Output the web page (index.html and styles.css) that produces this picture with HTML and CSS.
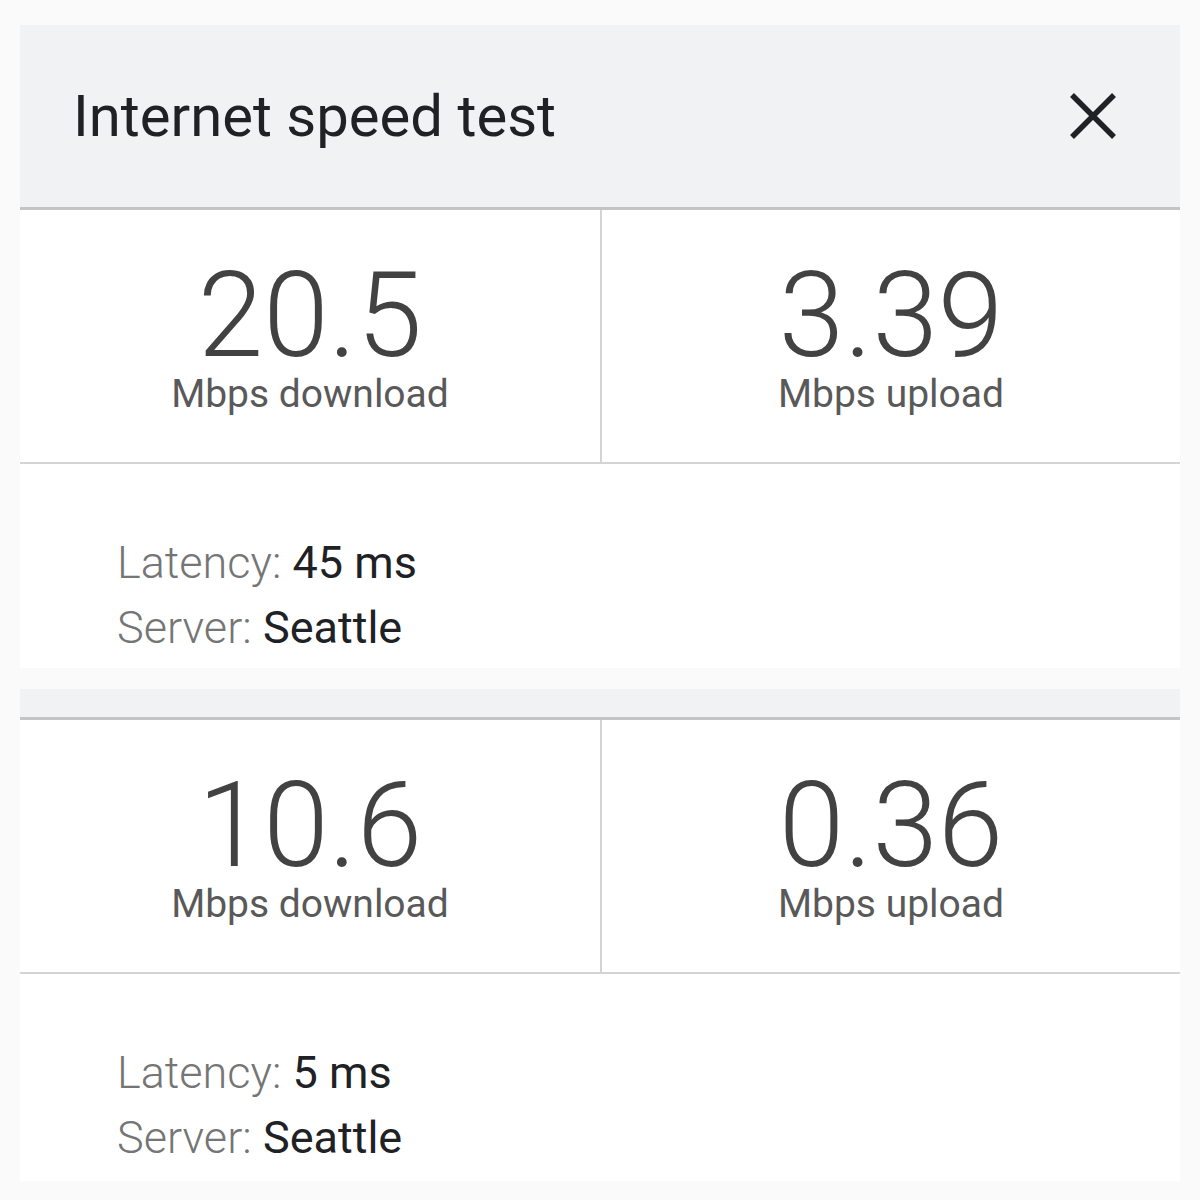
FILE: index.html
```html
<!DOCTYPE html>
<html lang="en">
<head>
<meta charset="UTF-8">
<meta name="viewport" content="width=device-width, initial-scale=1.0">
<title>Internet speed test</title>
<link rel="stylesheet" href="styles.css">
</head>
<body>
  <div class="card">
    <div class="header">
      <h2 class="title">Internet speed test</h2>
      <button class="close" aria-label="Close">
        <svg width="48" height="48" viewBox="0 0 48 48">
          <path d="M3 3L45 45M45 3L3 45" stroke="#202124" stroke-width="5.5" fill="none"/>
        </svg>
      </button>
    </div>
    <div class="stats">
      <div class="stat">
        <div class="value">20.5</div>
        <div class="unit">Mbps download</div>
      </div>
      <div class="stat">
        <div class="value">3.39</div>
        <div class="unit">Mbps upload</div>
      </div>
    </div>
    <div class="info">
      <div class="row"><span class="key">Latency:</span> 45 ms</div>
      <div class="row"><span class="key">Server:</span> Seattle</div>
    </div>
  </div>

  <div class="card">
    <div class="header compact"></div>
    <div class="stats">
      <div class="stat">
        <div class="value">10.6</div>
        <div class="unit">Mbps download</div>
      </div>
      <div class="stat">
        <div class="value">0.36</div>
        <div class="unit">Mbps upload</div>
      </div>
    </div>
    <div class="info tall">
      <div class="row"><span class="key">Latency:</span> 5 ms</div>
      <div class="row"><span class="key">Server:</span> Seattle</div>
    </div>
  </div>
</body>
</html>
```

FILE: styles.css
```css
body {
  font-family: Roboto, "Liberation Sans", sans-serif;
  margin: 0;
  padding: 25px 20px 0;
  background-color: #fafafa;
}

.card {
  background-color: #ffffff;
  margin-bottom: 21px;
}

.header {
  height: 182px;
  background-color: #f1f2f4;
  border-bottom: 3px solid #c4c4c4;
  display: flex;
  align-items: center;
  justify-content: space-between;
  padding: 0 63px 0 53px;
}

.header.compact {
  height: 28px;
}

.title {
  margin: 0;
  font-size: 58px;
  font-weight: 400;
  color: #202124;
}

.close {
  background: none;
  border: none;
  padding: 0;
  width: 48px;
  height: 48px;
  cursor: pointer;
}

.close svg {
  display: block;
}

.stats {
  display: grid;
  grid-template-columns: 1fr 1fr;
  border-bottom: 2px solid #d4d4d4;
}

.stat {
  height: 252px;
  box-sizing: border-box;
  padding-top: 52px;
  text-align: center;
}

.stat + .stat {
  border-left: 2px solid #d4d4d4;
}

.value {
  font-size: 118px;
  font-weight: 300;
  line-height: 108px;
  color: #424242;
}

.unit {
  font-size: 39px;
  line-height: 48px;
  color: #595959;
}

.info {
  height: 204px;
  box-sizing: border-box;
  padding: 66px 0 0 97px;
}

.info.tall {
  height: 207px;
}

.row {
  font-size: 45px;
  line-height: 65px;
  color: #202124;
}

.key {
  font-weight: 300;
  color: #757575;
}
```
